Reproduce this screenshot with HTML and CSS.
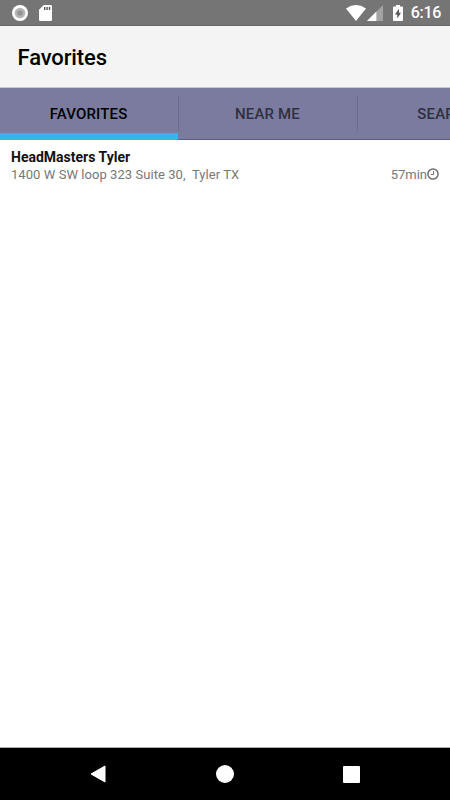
FILE: index.html
```html
<!DOCTYPE html>
<html lang="en">
<head>
    <meta charset="UTF-8">
    <meta name="viewport" content="width=device-width, initial-scale=1.0">
    <title>Favorites</title>
    <link rel="stylesheet" href="styles.css">
</head>
<body>
    <div class="status-bar">
        <svg class="icon-record" width="16" height="16" viewBox="0 0 16 16">
            <circle cx="8" cy="8" r="8" fill="#fff"/>
            <circle cx="8" cy="8" r="5.3" fill="#b5b5b5"/>
            <circle cx="8" cy="8" r="2.8" fill="#969696"/>
        </svg>
        <svg class="icon-sd" width="13" height="16" viewBox="0 0 13 16">
            <path fill="#fff" d="M4.8 0H11.8Q13 0 13 1.2V14.8Q13 16 11.8 16H1.2Q0 16 0 14.8V4.8Z"/>
            <path fill="#555" d="M5 2h1.4v3H5zM7.4 2h1.4v3H7.4zM9.8 2h1.4v3H9.8z"/>
        </svg>
        <span class="spacer"></span>
        <svg class="icon-wifi" width="20" height="16" viewBox="0 0 20 16">
            <path fill="#fff" d="M0 3.4Q10-3.4 20 3.4L10 16Z"/>
        </svg>
        <svg class="icon-signal" width="16" height="16" viewBox="0 0 16 16">
            <path fill="#a3a3a3" d="M16 0V16H0Z"/>
            <path fill="#fff" d="M9.4 6.6V16H0Z"/>
        </svg>
        <svg class="icon-battery" width="10" height="16" viewBox="0 0 10 16">
            <path fill="#fff" d="M3 0h4v1.6h2q1 0 1 1V15q0 1-1 1H1q-1 0-1-1V2.6q0-1 1-1h2z"/>
            <path fill="#555" d="M6 3.8V7.8H8L4.3 13.600V9.5H2z"/>
        </svg>
        <span class="time">6:16</span>
    </div>

    <div class="header">
        <h1>Favorites</h1>
    </div>

    <div class="tabs">
        <div class="tab active">FAVORITES</div>
        <div class="tab">NEAR ME</div>
        <div class="tab">SEARCH</div>
    </div>

    <div class="list">
        <div class="item">
            <div class="name">HeadMasters Tyler</div>
            <div class="details">
                <span class="address">1400 W SW loop 323 Suite 30,&nbsp; Tyler TX</span>
                <span class="wait">57min</span>
                <svg class="icon-clock" width="12" height="12" viewBox="0 0 12 12">
                    <circle cx="6" cy="6" r="5.1" fill="none" stroke="#707070" stroke-width="1.5"/>
                    <path fill="none" stroke="#707070" d="M6.5 3V6.500H3.800"/>
                </svg>
            </div>
        </div>
    </div>

    <div class="nav-bar">
        <svg width="16" height="18" viewBox="0 0 16 18">
            <path fill="#fff" stroke="#fff" stroke-linejoin="round" d="M1 9L15 1V17Z"/>
        </svg>
        <svg width="18" height="18" viewBox="0 0 18 18">
            <circle cx="9" cy="9" r="9" fill="#fff"/>
        </svg>
        <svg width="17" height="17" viewBox="0 0 17 17">
            <rect width="17" height="17" rx="1" fill="#fff"/>
        </svg>
    </div>
</body>
</html>
```
FILE: styles.css
```css
body {
    margin: 0;
    height: 800px;
    display: flex;
    flex-direction: column;
    overflow: hidden;
    font-family: Roboto, "Liberation Sans", sans-serif;
    background: white;
}
svg {
    display: block;
    flex: none;
}
.status-bar {
    display: flex;
    align-items: center;
    box-sizing: border-box;
    height: 26px;
    padding: 1px 9px 0 12px;
    background: #757575;
    border-bottom: 1px solid #686868;
}
.icon-sd {
    margin-left: 11px;
}
.spacer {
    flex: 1;
}
.icon-signal {
    margin-left: 1px;
}
.icon-battery {
    margin-left: 10px;
}
.time {
    margin-left: 8px;
    color: white;
    font-size: 16px;
    font-weight: 500;
    letter-spacing: -0.3px;
    line-height: 26px;
}
.header {
    box-sizing: border-box;
    height: 62px;
    padding: 0 17.5px;
    background: #f4f4f4;
    border-bottom: 1px solid #c8c8cc;
}
h1 {
    margin: 0;
    font-size: 22px;
    font-weight: 500;
    letter-spacing: -0.12px;
    line-height: 63px;
}
.tabs {
    display: flex;
    box-sizing: border-box;
    height: 52px;
    overflow: hidden;
    background: linear-gradient(#5c5c8c, #5c5c8c) bottom / 100% 1px no-repeat #7a7b9f;
}
.tab {
    position: relative;
    flex: none;
    box-sizing: border-box;
    width: 179px;
    height: 52px;
    padding-right: 2px;
    text-align: center;
    font-size: 15px;
    font-weight: 500;
    letter-spacing: 0.15px;
    line-height: 53px;
    color: #303040;
}
.tab::after {
    content: "";
    position: absolute;
    top: 8px;
    right: 0;
    width: 1px;
    height: 35px;
    background: #6b6c92;
}
.tab.active {
    color: black;
}
.tab.active::before {
    content: "";
    position: absolute;
    left: 0;
    right: 1px;
    bottom: 0;
    height: 7px;
    background: #33b5e5;
}
.list {
    flex: 1;
}
.item {
    padding: 8px 11px;
}
.name {
    font-size: 14px;
    font-weight: 700;
    line-height: 18px;
    color: #111;
}
.details {
    display: flex;
    align-items: center;
    font-size: 13px;
    line-height: 18px;
    color: #777;
}
.address {
    flex: 1;
    letter-spacing: 0.06px;
}
.icon-clock {
    margin-bottom: 2px;
}
.nav-bar {
    display: flex;
    align-items: center;
    justify-content: space-between;
    box-sizing: border-box;
    height: 53px;
    padding: 0 90px;
    background: black;
    border-top: 1px solid #aaa;
}
```
